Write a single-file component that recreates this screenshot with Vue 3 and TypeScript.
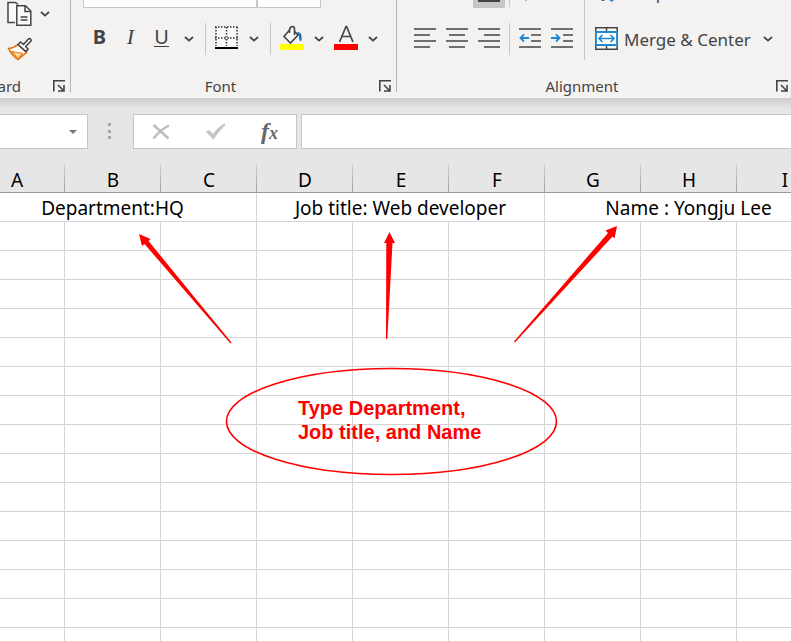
<script setup lang="ts">
import { ref } from 'vue'

interface Entry {
  text: string
  span: number
}

const columns: string[] = ['A', 'B', 'C', 'D', 'E', 'F', 'G', 'H', 'I']
const entries: Entry[] = [
  { text: 'Department:HQ', span: 3 },
  { text: 'Job title: Web developer', span: 3 },
  { text: 'Name : Yongju Lee', span: 3 },
]
const emptyRows = 16

const fontName = ref('')
const fontSize = ref('')
const cellName = ref('')
const formula = ref('')

const alignIcons: { label: string; path: string }[] = [
  { label: 'Align left', path: 'M0 2H22M0 8H16M0 14H22M0 20H16' },
  { label: 'Align center', path: 'M0 2H22M3 8H19M0 14H22M3 20H19' },
  { label: 'Align right', path: 'M0 2H22M6 8H22M0 14H22M6 20H22' },
]
const indentIcons: { label: string; arrow: string }[] = [
  { label: 'Decrease indent', arrow: 'M10 11H1.5M5 7.5L1.5 11L5 14.5' },
  { label: 'Increase indent', arrow: 'M0 11H8.5M5 7.5L8.5 11L5 14.5' },
]
</script>

<template>
  <div class="app">
    <header class="ribbon">
      <section class="group clipboard">
        <div class="clip-tools">
          <div class="clip-row">
            <button class="plain" aria-label="Copy">
              <svg width="26" height="26" viewBox="0 0 26 26" fill="none" stroke="#444" stroke-width="1.5">
                <path d="M8 21.5H1V1.5H8.5L11 3.5" fill="#fafafa" />
                <path d="M9.8 4.8H18.5L23.8 10V24.2H9.8Z" fill="#fafafa" />
                <path d="M18 5V10.5H23.5M13.5 16H20.5M13.5 19H20.5" />
              </svg>
            </button>
            <button class="plain" aria-label="Copy options">
              <svg class="chev" width="10" height="6" viewBox="0 0 10 6"><path d="M1 1L5 4.6L9 1" /></svg>
            </button>
          </div>
          <button class="plain" aria-label="Format painter">
            <svg width="26" height="24" viewBox="0 0 26 24" fill="none">
              <path d="M1.500 11.500Q7 11 11 7.500L19.500 15.500L11 22.500Q4.500 18 1.500 11.500Z" fill="#fff" stroke="#e36c0a" stroke-width="1.6" />
              <path d="M5 14.5L15.500 16.500L11 22Z" fill="#fcd9a0" stroke="#e98020" stroke-width="1.200" />
              <path d="M11 7.500L13.500 5L16.500 7.500L21.500 2Q24 .8 24.200 3.700L18.700 9.500L21 12L19 14.500Z" fill="#fff" stroke="#444" stroke-width="1.6" />
            </svg>
          </button>
        </div>
        <footer class="caption">
          <span class="cut">Clipboard</span>
          <button class="plain" aria-label="Clipboard settings">
            <svg class="launch" width="12" height="12" viewBox="0 0 12 12"><path d="M.8 11.500V.8H12M5 5L10.500 10.500M11 5V11H5" /></svg>
          </button>
        </footer>
      </section>

      <section class="group font">
        <div class="top boxes">
          <input v-model="fontName" class="font-name" aria-label="Font name" />
          <input v-model="fontSize" class="font-size" aria-label="Font size" />
        </div>
        <div class="tools">
          <button class="tool letter bold" aria-label="Bold">B</button>
          <button class="tool letter italic" aria-label="Italic">I</button>
          <button class="tool letter" aria-label="Underline"><span class="underlined">U</span></button>
          <button class="drop" aria-label="Underline options">
            <svg class="chev" width="10" height="6" viewBox="0 0 10 6"><path d="M1 1L5 4.6L9 1" /></svg>
          </button>
          <i class="rule"></i>
          <button class="tool" aria-label="Borders">
            <svg width="23" height="26" viewBox="0 0 23 26" fill="none" stroke="#333">
              <path d="M1 1H22V21H1Z" fill="#fafafa" stroke="none" />
              <path d="M0 1H23M0 12H23" stroke-width="1.500" stroke-dasharray="1.500 1.500" />
              <path d="M1 1V20M11.500 1V20M22 1V20" stroke-width="1.500" stroke-dasharray="1.500 1.500" />
              <path d="M9.500 12L11.500 10L13.500 12L11.500 14Z" fill="#fff" />
              <path d="M0 22H23" stroke="#000" stroke-width="2" />
            </svg>
          </button>
          <button class="drop" aria-label="Border options">
            <svg class="chev" width="10" height="6" viewBox="0 0 10 6"><path d="M1 1L5 4.6L9 1" /></svg>
          </button>
          <i class="rule"></i>
          <button class="tool" aria-label="Fill color">
            <svg width="24" height="28" viewBox="0 0 24 28" fill="none">
              <path d="M10 4.500L4 11.500L10.500 18L18 10L14.500 6.500" fill="#fafafa" stroke="#444" stroke-width="1.600" />
              <path d="M9.500 8V5Q10 1.500 12.500 1.500Q14.500 1.500 14.500 4V10" stroke="#444" stroke-width="1.600" />
              <path d="M16.500 7.500Q22.500 5.500 21.500 15.500Q19.500 17 19.200 14Q19.500 10.500 16.500 7.500Z" fill="#1a6fb5" />
              <path d="M0 19H24V25H0Z" fill="#ff0" />
            </svg>
          </button>
          <button class="drop" aria-label="Fill color options">
            <svg class="chev" width="10" height="6" viewBox="0 0 10 6"><path d="M1 1L5 4.6L9 1" /></svg>
          </button>
          <button class="tool" aria-label="Font color">
            <svg width="24" height="28" viewBox="0 0 24 28" fill="none">
              <path d="M5.500 17L12 1.500H12.600L19 17M7.800 11.500H16.800" stroke="#444" stroke-width="1.700" />
              <path d="M0 19H24V25H0Z" fill="#f00" />
            </svg>
          </button>
          <button class="drop" aria-label="Font color options">
            <svg class="chev" width="10" height="6" viewBox="0 0 10 6"><path d="M1 1L5 4.6L9 1" /></svg>
          </button>
        </div>
        <footer class="caption">
          <span>Font</span>
          <button class="plain" aria-label="Font settings">
            <svg class="launch" width="12" height="12" viewBox="0 0 12 12"><path d="M.8 11.500V.8H12M5 5L10.500 10.500M11 5V11H5" /></svg>
          </button>
        </footer>
      </section>

      <section class="group alignment">
        <div class="align-body">
          <div class="align-left">
            <div class="top align-top">
              <button class="chosen" aria-label="Bottom align">
                <svg width="22" height="2" viewBox="0 0 22 2"><path d="M0 1H22" stroke="#444" stroke-width="2" /></svg>
              </button>
              <i class="rule"></i>
              <button class="plain orient" aria-label="Orientation">
                <svg width="4" height="2" viewBox="0 0 4 2"><path d="M1 0H3L2 1Z" fill="#2b88d8" /></svg>
              </button>
            </div>
            <div class="tools">
              <button v-for="icon in alignIcons" :key="icon.label" class="line-tool" :aria-label="icon.label">
                <svg width="22" height="24" viewBox="0 0 22 24"><path :d="icon.path" stroke="#444" stroke-width="1.700" /></svg>
              </button>
              <i class="rule tight"></i>
              <button v-for="icon in indentIcons" :key="icon.label" class="line-tool" :aria-label="icon.label">
                <svg width="22" height="24" viewBox="0 0 22 24" fill="none">
                  <path d="M0 2H22M12 8H22M12 14H22M0 20H22" stroke="#444" stroke-width="1.700" />
                  <path :d="icon.arrow" stroke="#2088d0" stroke-width="1.800" />
                </svg>
              </button>
            </div>
          </div>
          <div class="align-right">
            <button class="plain wrap">
              <svg width="23" height="2" viewBox="0 0 23 2"><path d="M6 0H10L9 1H7Z" fill="#666" /><path d="M14 0H19L17 2Z" fill="#2b88d8" /></svg>
              <span>Wrap Text</span>
            </button>
            <div class="merge-row">
              <button class="plain merge">
                <svg width="23" height="25" viewBox="0 0 23 25" fill="none">
                  <path d="M.8 .8H22.200V22.200H.8ZM11.500 1V5M11.500 18V22" fill="#fafafa" stroke="#444" stroke-width="1.500" />
                  <path d="M1 5H22V18H1Z" fill="#fff" stroke="#2088d0" stroke-width="1.800" />
                  <path d="M4 11.500H19M7.500 8L4 11.500L7.500 15M15.500 8L19 11.500L15.500 15" stroke="#2088d0" stroke-width="1.700" />
                </svg>
                <span>Merge &amp; Center</span>
              </button>
              <button class="drop" aria-label="Merge options">
                <svg class="chev" width="10" height="6" viewBox="0 0 10 6"><path d="M1 1L5 4.6L9 1" /></svg>
              </button>
            </div>
          </div>
        </div>
        <footer class="caption">
          <span>Alignment</span>
          <button class="plain" aria-label="Alignment settings">
            <svg class="launch" width="12" height="12" viewBox="0 0 12 12"><path d="M.8 11.500V.8H12M5 5L10.500 10.500M11 5V11H5" /></svg>
          </button>
        </footer>
      </section>
    </header>

    <div class="formula-bar">
      <div class="name-box">
        <input v-model="cellName" aria-label="Name box" />
        <button class="plain" aria-label="Named cells">
          <svg width="8" height="4" viewBox="0 0 8 4"><path d="M0 0H8L4 4Z" fill="#777" /></svg>
        </button>
      </div>
      <svg class="grip" width="3" height="17" viewBox="0 0 3 17"><path d="M0 0H3V3H0ZM0 7H3V10H0ZM0 13H3V16H0Z" fill="#a6a6a6" /></svg>
      <div class="fx-box">
        <button class="plain" aria-label="Cancel">
          <svg width="18" height="16" viewBox="0 0 18 16" fill="none" stroke="#bdbdbd">
            <path d="M1.500 1L16.500 14.500" stroke-width="2.500" /><path d="M17 1.500Q8 6 1.500 14.500" stroke-width="2.500" />
          </svg>
        </button>
        <button class="plain" aria-label="Enter">
          <svg width="20" height="17" viewBox="0 0 20 17"><path d="M0 9L3 7L7 11Q12 4 19 0V2.500Q12 9 7.500 16.500Z" fill="#c4c4c4" /></svg>
        </button>
        <button class="plain fx" aria-label="Insert function"><span>f</span><small>x</small></button>
      </div>
      <input v-model="formula" class="formula" aria-label="Formula" />
    </div>

    <main class="sheet">
      <table>
        <thead>
          <tr><th v-for="name in columns" :key="name" scope="col">{{ name }}</th></tr>
        </thead>
        <tbody>
          <tr>
            <td v-for="entry in entries" :key="entry.text" :colspan="entry.span">{{ entry.text }}</td>
          </tr>
          <tr v-for="row in emptyRows" :key="row">
            <td v-for="name in columns" :key="name"></td>
          </tr>
        </tbody>
      </table>
      <svg class="marks" width="791" height="477" viewBox="0 164 791 477" aria-hidden="true">
        <g fill="#f00">
          <path d="M139 234L150.500 239L148.500 241L231.500 342.500L230.500 343.500L144.500 244L142 246Z" />
          <path d="M389.500 232L395 243H392.500L387.300 339H386L386.300 243H384Z" />
          <path d="M617 226L614.500 238.500L612.500 236.500L515 342.500L514 341.500L608 233L605.500 230.500Z" />
        </g>
        <ellipse cx="391.500" cy="421.500" rx="165" ry="53" fill="none" stroke="#f00" stroke-width="1.600" />
      </svg>
      <p class="note">Type Department,<br />Job title, and Name</p>
    </main>
  </div>
</template>

<style>
body {
  margin: 0;
}
</style>

<style scoped>
.app {
  height: 100vh;
  display: flex;
  flex-direction: column;
  overflow: hidden;
  background: #e6e6e6;
  font-family: "Noto Sans", "Open Sans", sans-serif;
  color: #444;
}
button {
  display: flex;
  align-items: center;
  justify-content: center;
  padding: 0;
  border: 0;
  background: none;
  font: inherit;
  color: inherit;
}
input {
  box-sizing: border-box;
  min-width: 0;
  padding: 0 8px;
  border: 1px solid #c6c6c6;
  background: #fff;
  font: inherit;
}
svg {
  display: block;
  flex: none;
}
.chev path {
  fill: none;
  stroke: #444;
  stroke-width: 1.8;
}
.launch path {
  fill: none;
  stroke: #444;
  stroke-width: 1.6;
}
.ribbon {
  display: flex;
  flex: none;
  height: 98px;
  background: #f3f2f1;
}
.group {
  display: flex;
  flex-direction: column;
  box-sizing: border-box;
  height: 92px;
  border-right: 1px solid #b5b3b1;
}
.clipboard {
  width: 71px;
}
.font {
  width: 326px;
}
.alignment {
  flex: 1;
  min-width: 0;
  height: 98px;
  border: 0;
}
.clip-tools {
  display: flex;
  flex-direction: column;
  align-items: flex-start;
  gap: 10px;
  padding: 1px 0 0 7px;
}
.clip-row {
  display: flex;
  gap: 7px;
}
.caption {
  display: flex;
  align-items: center;
  height: 20px;
  margin-top: auto;
  padding-right: 5px;
  font-size: 15px;
  line-height: 20px;
}
.group:not(.alignment) .caption {
  margin-bottom: -4px;
}
.alignment .caption {
  margin-bottom: 2px;
  padding-right: 3px;
}
.caption span {
  flex: 1;
  padding-right: 9px;
  text-align: center;
}
.caption .cut {
  display: flex;
  justify-content: flex-end;
  width: 21px;
  flex: none;
  padding: 0;
  overflow: hidden;
}
.clipboard .caption {
  justify-content: space-between;
}
.top {
  display: flex;
  height: 8px;
}
.boxes {
  padding-left: 12px;
}
.boxes input {
  height: 8px;
  border-top: 0;
}
.font-name {
  width: 174px;
}
.font-size {
  width: 64px;
}
.tools {
  display: flex;
  align-items: center;
  height: 32px;
  margin-top: 15px;
}
.font .tools {
  padding-left: 13px;
}
.tool {
  width: 31px;
  height: 32px;
}
.drop {
  width: 23px;
  height: 32px;
}
.rule {
  width: 1px;
  height: 32px;
  margin: 0 5px;
  background: #c8c6c4;
}
.letter {
  box-sizing: border-box;
  padding-bottom: 4px;
  font-size: 20px;
  line-height: 28px;
}
.bold {
  font-weight: 700;
}
.italic {
  font-family: "Liberation Serif", serif;
  font-style: italic;
  font-size: 22px;
}
.underlined {
  height: 19px;
  border-bottom: 1px solid #444;
  line-height: 20px;
}
.align-body {
  display: flex;
}
.align-left {
  box-sizing: border-box;
  width: 188px;
  height: 60px;
  padding-left: 12px;
  border-right: 1px solid #c8c6c4;
}
.align-top {
  padding-left: 64px;
}
.align-top .rule {
  height: 7px;
  margin: 0 4px;
}
.chosen {
  align-items: flex-start;
  width: 32px;
  background: #c8c6c4;
}
.orient {
  align-items: flex-start;
  margin-left: 10px;
}
.line-tool {
  width: 32px;
  height: 32px;
}
.rule.tight {
  margin: 0 4px;
}
.align-right {
  flex: 1;
  min-width: 0;
  padding-left: 10px;
}
.wrap,
.merge {
  gap: 6px;
  font-size: 17px;
}
.wrap {
  align-items: flex-end;
  height: 3px;
  overflow: hidden;
}
.wrap svg {
  align-self: flex-start;
}
.wrap span {
  line-height: 20px;
}
.merge-row {
  display: flex;
  align-items: center;
  gap: 6px;
  height: 32px;
  margin-top: 20px;
}
.merge {
  white-space: nowrap;
}
.formula-bar {
  display: flex;
  flex: none;
  align-items: center;
  height: 35px;
  padding: 16px 0 15px;
  background: linear-gradient(#cfcdcb, #e6e6e6 11px);
}
.name-box,
.fx-box {
  display: flex;
  align-items: center;
  box-sizing: border-box;
  height: 35px;
  border: 1px solid #c6c6c6;
  background: #fff;
}
.name-box {
  width: 88px;
  border-left: 0;
  padding-right: 10px;
}
.name-box input {
  flex: 1;
  border: 0;
}
.grip {
  margin: 0 22px 0 20px;
}
.fx-box {
  justify-content: space-between;
  width: 164px;
  padding: 0 18px;
}
.fx {
  align-items: baseline;
  font: italic bold 24px/24px "Liberation Serif", serif;
  color: #666;
}
.fx small {
  font-size: 18px;
}
.formula {
  flex: 1;
  height: 35px;
  margin-left: 4px;
  border-right: 0;
}
.sheet {
  position: relative;
  flex: 1;
  min-height: 0;
  overflow: hidden;
}
table {
  width: 864px;
  margin-left: -31px;
  border-collapse: separate;
  border-spacing: 0;
  table-layout: fixed;
  background: #fff;
  color: #000;
}
th,
td {
  box-sizing: border-box;
  height: 29px;
  padding: 2px 0 0;
  border-right: 1px solid #d4d4d4;
  border-bottom: 1px solid #d4d4d4;
  font-size: 19px;
  line-height: 26px;
  font-weight: 400;
  text-align: center;
  white-space: nowrap;
}
th {
  padding-top: 4px;
  border-right: 0;
  border-bottom-color: #999;
  line-height: 24px;
  background: linear-gradient(#d0d0d0, #a0a0a0) right / 1px 100% no-repeat #e6e6e6;
}
.marks {
  position: absolute;
  top: 0;
  left: 0;
}
.note {
  position: absolute;
  top: 232px;
  left: 298px;
  margin: 0;
  font: bold 20px/24px "Liberation Sans", Arial, sans-serif;
  color: #f00;
}
</style>
